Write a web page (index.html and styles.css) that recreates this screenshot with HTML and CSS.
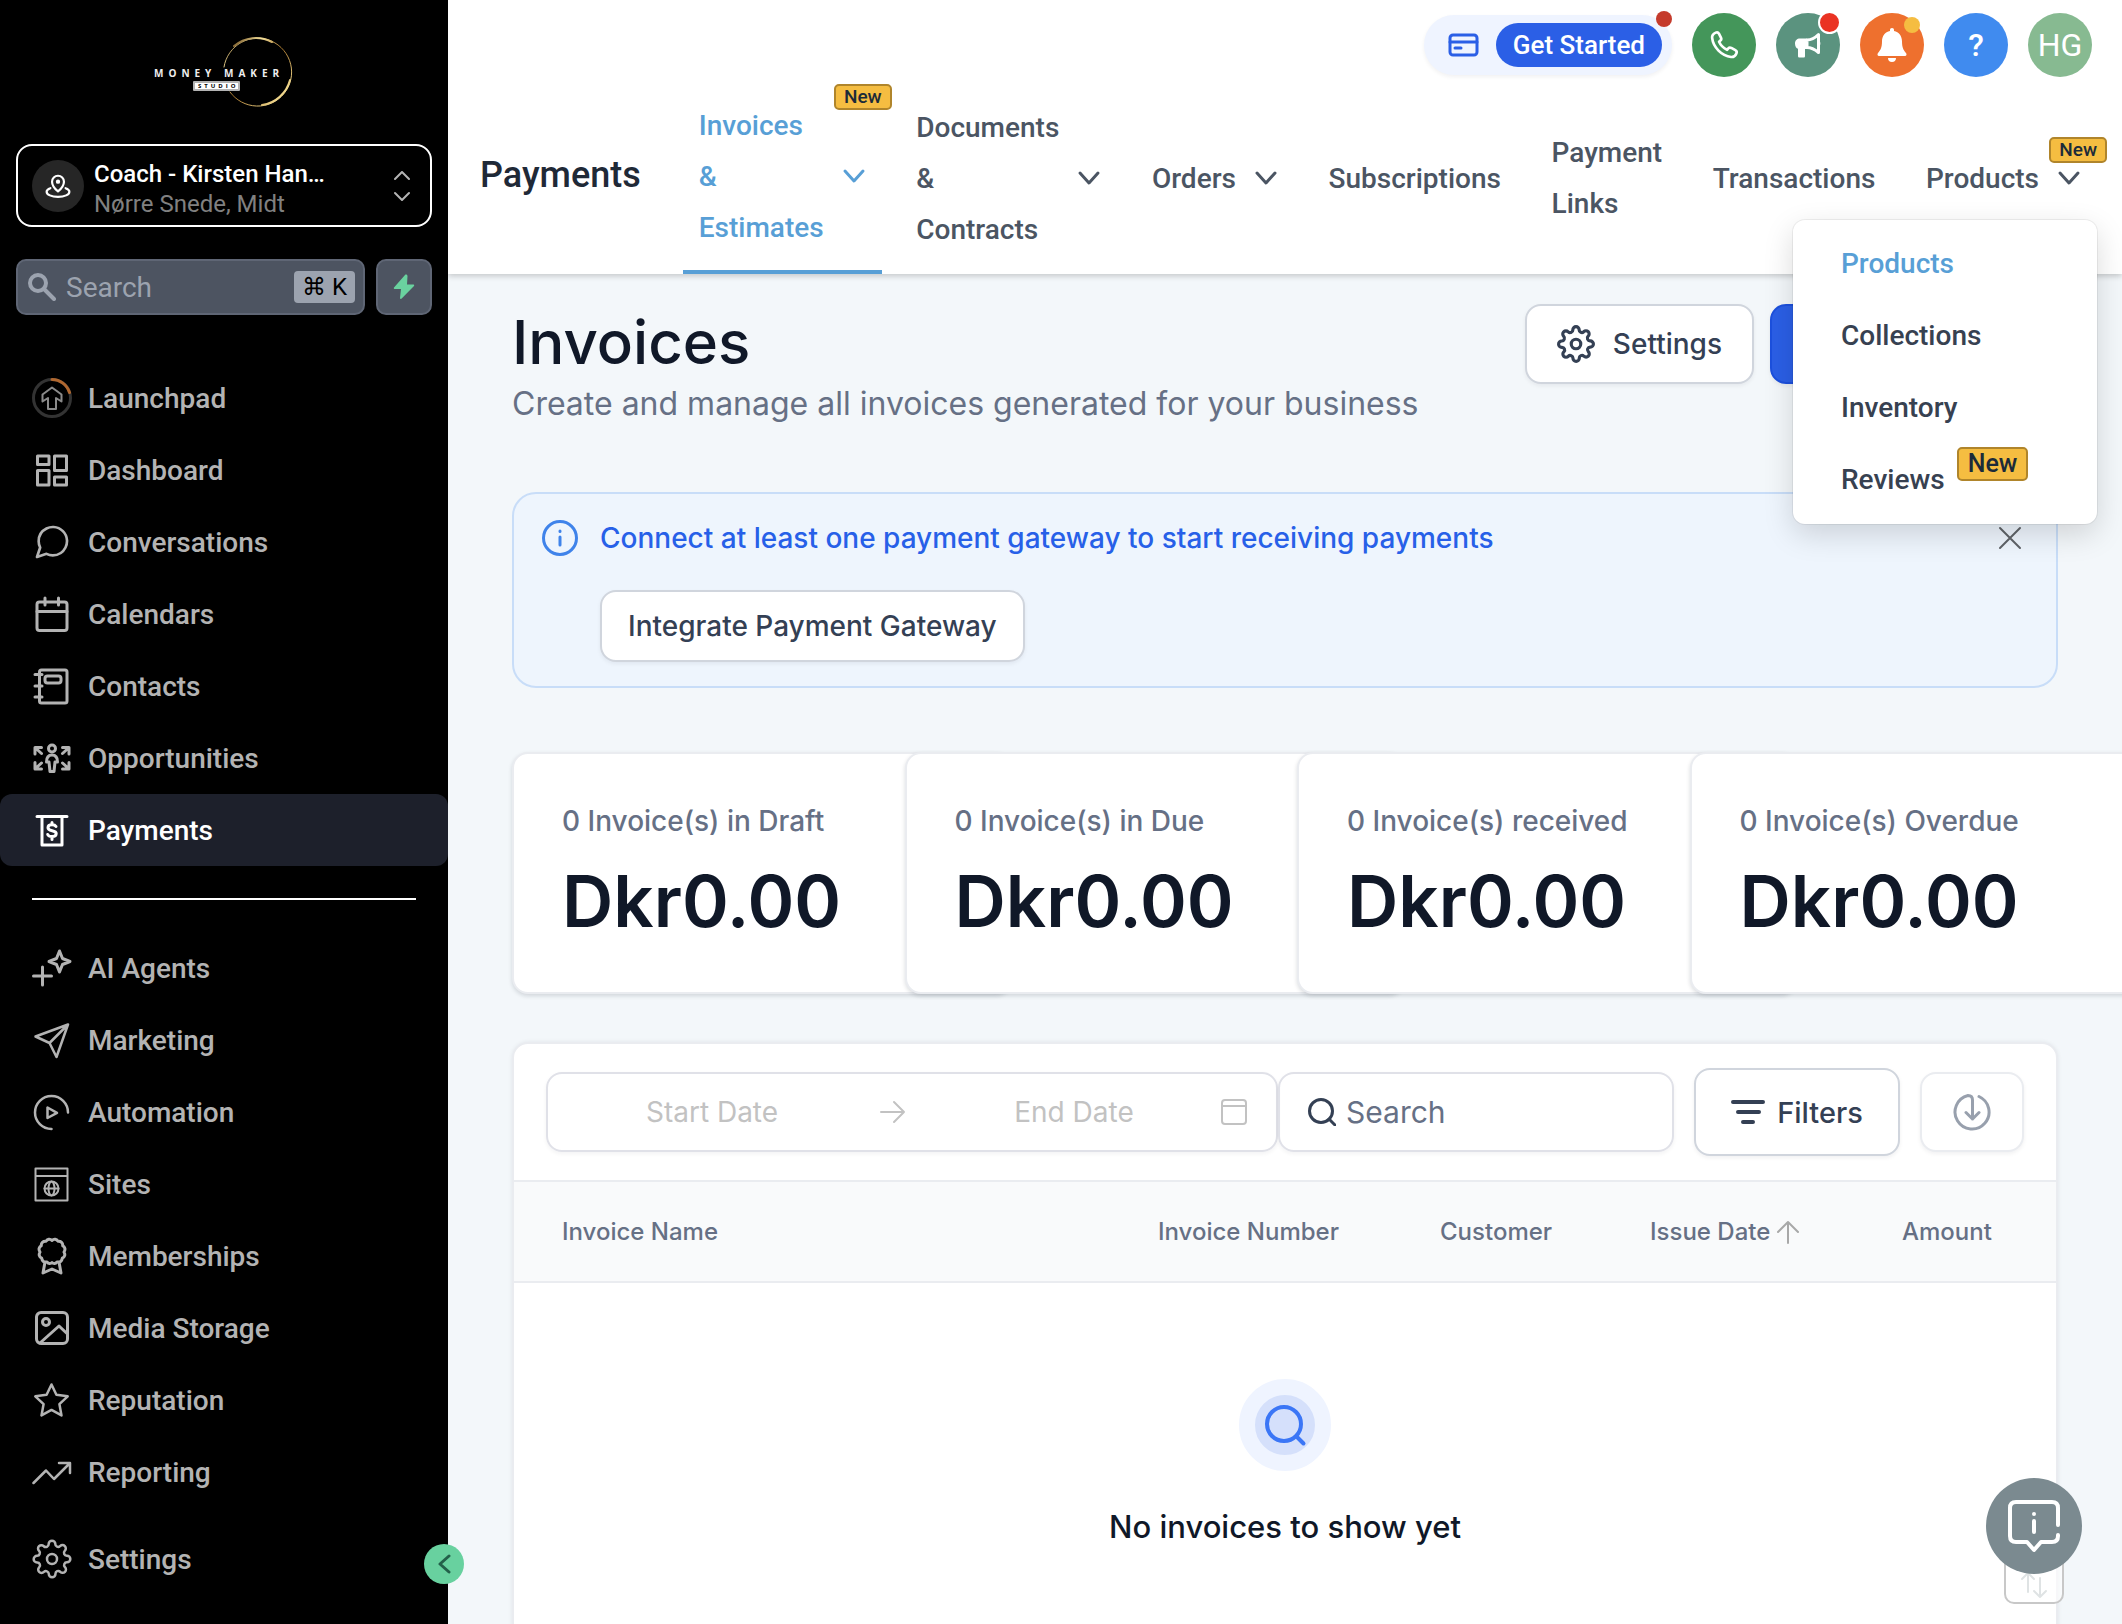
FILE: index.html
```html
<!DOCTYPE html>
<html lang="en">
<head>
    <meta charset="UTF-8">
    <meta name="viewport" content="width=device-width, initial-scale=1.0">
    <title>Invoices</title>
    <link rel="stylesheet" href="styles.css">
</head>
<body>

<!-- Shared icons -->
<svg class="sprite" aria-hidden="true">
    <symbol id="icon-gear" viewBox="0 0 24 24">
        <circle cx="12" cy="12" r="3"/>
        <path d="M19.4 15a1.65 1.65 0 0 0 .33 1.82l.06.06a2 2 0 0 1 0 2.83 2 2 0 0 1-2.83 0l-.06-.06a1.65 1.65 0 0 0-1.82-.33 1.65 1.65 0 0 0-1 1.51V21a2 2 0 0 1-2 2 2 2 0 0 1-2-2v-.09A1.65 1.65 0 0 0 9 19.4a1.65 1.65 0 0 0-1.82.33l-.06.06a2 2 0 0 1-2.83 0 2 2 0 0 1 0-2.83l.06-.06a1.65 1.65 0 0 0 .33-1.82 1.65 1.65 0 0 0-1.51-1H3a2 2 0 0 1-2-2 2 2 0 0 1 2-2h.09A1.65 1.65 0 0 0 4.6 9a1.65 1.65 0 0 0-.33-1.82l-.06-.06a2 2 0 0 1 0-2.83 2 2 0 0 1 2.83 0l.06.06a1.65 1.65 0 0 0 1.82.33H9a1.65 1.65 0 0 0 1-1.51V3a2 2 0 0 1 2-2 2 2 0 0 1 2 2v.09a1.65 1.65 0 0 0 1 1.51 1.65 1.65 0 0 0 1.82-.33l.06-.06a2 2 0 0 1 2.83 0 2 2 0 0 1 0 2.83l-.06.06a1.65 1.65 0 0 0-.33 1.82V9a1.65 1.65 0 0 0 1.51 1H21a2 2 0 0 1 2 2 2 2 0 0 1-2 2h-.09a1.65 1.65 0 0 0-1.51 1z"/>
    </symbol>
    <symbol id="icon-chevron" viewBox="0 0 24 24">
        <path d="M3 7l9 10 9-10"/>
    </symbol>
</svg>

<div class="app">

    <!-- Sidebar -->
    <aside class="sidebar">
        <div class="logo">
            <svg width="148" height="76" viewBox="0 0 148 76" role="img" aria-label="Money Maker Studio">
                <defs>
                    <linearGradient id="gold" x1="0" y1="0" x2="1" y2="1">
                        <stop offset="0" stop-color="#6b4a1b"/>
                        <stop offset="0.25" stop-color="#f3df9a"/>
                        <stop offset="0.5" stop-color="#a5752c"/>
                        <stop offset="0.85" stop-color="#f0d78c"/>
                        <stop offset="1" stop-color="#8d6526"/>
                    </linearGradient>
                </defs>
                <path class="logo-ring" d="M74 33A34 34 0 1 1 80 58"/>
                <path class="logo-ring bold" d="M84 12A34 34 0 0 1 122 8M140 46A34 34 0 0 1 112 71"/>
                <text class="logo-name" x="4" y="43">MONEY MAKER</text>
                <rect x="44" y="48" width="45" height="8" fill="#fff"/>
                <text class="logo-sub" x="48" y="54">STUDIO</text>
            </svg>
        </div>

        <button class="location">
            <span class="location-icon">
                <svg width="26" height="26" viewBox="0 0 24 24" aria-hidden="true">
                    <path d="M12 17s5.500-4.500 5.500-9a5.500 5.500 0 0 0-11 0c0 4.500 5.500 9 5.500 9z"/>
                    <circle cx="12" cy="8" r="1"/>
                    <path d="M5 14c-2 .7-3.500 1.700-3.500 3.200C1.500 20 6 22 12 22s10.500-2 10.500-4.800c0-1.500-1.500-2.500-3.500-3.200"/>
                </svg>
            </span>
            <span class="location-text">
                <span class="location-name">Coach - Kirsten Han…</span>
                <span class="location-place">Nørre Snede, Midt</span>
            </span>
            <svg class="location-arrows" width="16" height="30" viewBox="0 0 16 30" aria-hidden="true">
                <path d="M1 8l7-7 7 7M1 22l7 7 7-7"/>
            </svg>
        </button>

        <div class="sidebar-search">
            <label class="search-field">
                <svg width="28" height="28" viewBox="0 0 28 28" aria-hidden="true">
                    <circle cx="10" cy="10" r="8"/>
                    <path d="M16 16l10 10"/>
                </svg>
                <input type="text" placeholder="Search" aria-label="Search the account">
                <kbd>⌘ K</kbd>
            </label>
            <button class="bolt" aria-label="Quick actions">
                <svg width="24" height="26" viewBox="0 0 24 26" aria-hidden="true">
                    <path d="M13 1L2 13.500c-.6.800 0 1.500 1 1.500h6l-1 9c0 1 1 1.300 1.700.5L22 12c.6-.8 0-1.500-1-1.500h-6l.5-8.500c0-1-1.500-2-2.500-1z"/>
                </svg>
            </button>
        </div>

        <nav class="side-nav" aria-label="Main">
            <a href="#" class="side-link">
                <svg class="side-icon" viewBox="0 0 40 40">
                    <circle cx="20" cy="20" r="18.500" stroke="#333"/>
                    <path d="M20 1.500A18.500 18.500 0 0 1 37.500 14.500" stroke="#b0672f"/>
                    <path d="M20 9.500l9.500 7v7L24 20v11h-8V20l-5.500 3.500v-7z" stroke="#8b8b8b" stroke-width="2"/>
                </svg>
                Launchpad
            </a>
            <a href="#" class="side-link">
                <svg class="side-icon" viewBox="0 0 40 40">
                    <path d="M5.500 6h11.500v8.500H5.500zM22.500 6H34.500v14.500H22.500zM5.500 20.500h11.500V35H5.500zM22.500 27H34.500v8H22.500z"/>
                </svg>
                Dashboard
            </a>
            <a href="#" class="side-link">
                <svg class="side-icon" viewBox="0 0 24 24">
                    <path stroke-width="1.600" d="M21 11.500a8.380 8.380 0 0 1-.9 3.800 8.500 8.500 0 0 1-7.600 4.700 8.380 8.380 0 0 1-3.800-.9L3 21l1.900-5.700a8.380 8.380 0 0 1-.9-3.800 8.500 8.500 0 0 1 4.700-7.600 8.380 8.380 0 0 1 3.800-.9h.5a8.480 8.480 0 0 1 8 8v.5z"/>
                </svg>
                Conversations
            </a>
            <a href="#" class="side-link">
                <svg class="side-icon" viewBox="0 0 40 40">
                    <rect x="5" y="8" width="30" height="28.500" rx="2.500"/>
                    <path d="M5 17.500h30M13 4v7M26.500 4v7"/>
                </svg>
                Calendars
            </a>
            <a href="#" class="side-link">
                <svg class="side-icon" viewBox="0 0 40 40">
                    <rect x="7.500" y="4" width="27.500" height="33" rx="2"/>
                    <rect x="13" y="10" width="16" height="7" rx="2.500"/>
                    <path d="M3 8.500h7M3 20h7M3 31h7"/>
                </svg>
                Contacts
            </a>
            <a href="#" class="side-link">
                <svg class="side-icon" viewBox="0 0 40 40">
                    <circle cx="20" cy="10.500" r="3.500"/>
                    <path d="M20 17c-4 0-5.500 2.500-5.500 7h2.500l1 9.500h4l1-9.500h2.500c0-4.500-1.500-7-5.500-7z"/>
                    <path d="M3 16V9.500h6.500M3.500 10l6 5.500M37 16V9.500h-6.500M36.500 10l-6 5.500M3 24.500V31h6.500M3.500 30.500l6-5.500M37 24.500V31h-6.500M36.500 30.500l-6-5.500"/>
                </svg>
                Opportunities
            </a>
            <a href="#" class="side-link active" aria-current="page">
                <svg class="side-icon" viewBox="0 0 40 40">
                    <path d="M5 6.500h30M10 6.500v28.500h20V6.500"/>
                    <path d="M24 16.500c-.7-1.200-2-1.700-4-1.700-2.500 0-4 1-4 2.900 0 4.300 8.200 1.700 8.200 5.900 0 1.900-1.700 3-4.200 3-2.200 0-3.700-.7-4.300-2.100M20 12.500v2M20 27v2.500"/>
                </svg>
                Payments
            </a>

            <hr class="side-divider">

            <a href="#" class="side-link">
                <svg class="side-icon" viewBox="0 0 40 40">
                    <path d="M27.500 3l3 7.500 7.500 3-7.500 3-3 7.500-3-7.500-7.500-3 7.500-3zM10.500 19v18M1.500 28h18"/>
                </svg>
                AI Agents
            </a>
            <a href="#" class="side-link">
                <svg class="side-icon" viewBox="0 0 40 40">
                    <path stroke-width="2.500" d="M36 4.500L3.500 16.500l14 6.500 7 14zM17.500 23L36 4.500"/>
                </svg>
                Marketing
            </a>
            <a href="#" class="side-link">
                <svg class="side-icon" viewBox="0 0 40 40">
                    <path stroke-width="2.500" d="M36 20.500A16.500 16.500 0 1 0 19.500 37M15.500 15.500v10.500l9.500-5.200z"/>
                </svg>
                Automation
            </a>
            <a href="#" class="side-link">
                <svg class="side-icon" viewBox="0 0 40 40">
                    <path stroke-width="2" d="M3.500 4.500h32V36.500h-32zM3.500 12h32"/>
                    <circle cx="19.500" cy="24.500" r="7" stroke-width="2"/>
                    <ellipse cx="19.500" cy="24.500" rx="3" ry="7" stroke-width="2"/>
                    <path stroke-width="2" d="M12.500 24.500h14"/>
                </svg>
                Sites
            </a>
            <a href="#" class="side-link">
                <svg class="side-icon" viewBox="0 0 40 40">
                    <path d="M20 4.500c2-2 4.500-1.500 6 .8 3-.3 5 1.500 4.700 4.300 2.300 1.400 3 4 1.300 6.400 1.500 2.500.8 5-1.700 6.200-.4 3-2.300 4.300-5.300 3.800-1.500 1.800-3.500 2-5 .5-1.500 1.500-3.500 1.300-5-.5-3 .5-4.900-.8-5.300-3.800-2.500-1.200-3.200-3.700-1.700-6.200-1.700-2.400-1-5 1.300-6.400C9 6.800 11 5 14 5.300c1.500-2.300 4-2.800 6-.8zM13 26l-2 11 9-4 9 4-2-11"/>
                </svg>
                Memberships
            </a>
            <a href="#" class="side-link">
                <svg class="side-icon" viewBox="0 0 40 40">
                    <rect x="4.500" y="4.500" width="31" height="31" rx="4.500"/>
                    <circle cx="14" cy="14" r="3.500"/>
                    <path d="M8 35L27 18l8.500 8"/>
                </svg>
                Media Storage
            </a>
            <a href="#" class="side-link">
                <svg class="side-icon" viewBox="0 0 40 40">
                    <path stroke-width="2.500" d="M19.500 4.500l4.900 10.300 11.300 1.500-8.300 7.800 2.100 11.300-10-5.500-10 5.500 2.100-11.300-8.300-7.800 11.300-1.500z"/>
                </svg>
                Reputation
            </a>
            <a href="#" class="side-link">
                <svg class="side-icon" viewBox="0 0 40 40">
                    <path stroke-width="2.500" d="M1.500 31L14 18.500l8 8.500L37 12M27 11h11v10"/>
                </svg>
                Reporting
            </a>
        </nav>

        <a href="#" class="side-link side-settings">
            <svg class="side-icon" viewBox="0 0 24 24"><use href="#icon-gear"/></svg>
            Settings
        </a>

        <button class="collapse" aria-label="Collapse sidebar">
            <svg width="14" height="20" viewBox="0 0 14 20" aria-hidden="true"><path d="M12 2L3 10l9 8"/></svg>
        </button>
    </aside>

    <!-- Right side -->
    <div class="content">
        <header class="header">
            <div class="topbar">
                <div class="get-started">
                    <svg width="32" height="24" viewBox="0 0 32 24" aria-hidden="true">
                        <rect x="2" y="2" width="27" height="20" rx="3"/>
                        <path d="M2 9h27M7 15h6"/>
                    </svg>
                    <button class="get-started-button">Get Started</button>
                    <span class="dot dot-started"></span>
                </div>
                <button class="round green" aria-label="Phone">
                    <svg width="32" height="32" viewBox="0 0 24 24" fill="none" stroke="currentColor" aria-hidden="true">
                        <path d="M8.200 3.500c-.5-.9-1.500-1.200-2.400-.8-1.900.8-2.900 2.100-2.700 4C3.900 13.800 10.300 20.200 17.300 21c1.900.2 3.200-.8 4-2.700.4-.9.1-1.900-.8-2.400l-3-1.700c-.8-.4-1.700-.3-2.300.4l-.9 1c-2.900-1.400-4.800-3.300-6-6l1-.9c.7-.6.8-1.500.4-2.300z"/>
                    </svg>
                </button>
                <button class="round teal" aria-label="Announcements">
                    <svg width="32" height="32" viewBox="0 0 32 32" fill="currentColor" aria-hidden="true">
                        <path d="M15 9.500H8c-3 0-5 2-5 5s1.500 5 3 5.300V27c0 1 .7 1.500 1.500 1.500h4c1 0 1.500-.5 1.500-1.500v-7h2z"/>
                        <path d="M15 11c4.500 0 8.500-2.500 11.500-5.500v18C23.500 21 19.500 18.500 15 18.500z" fill="none" stroke="currentColor" stroke-width="3" stroke-linejoin="round"/>
                        <path d="M27 11.500c1.800.8 1.800 5.200 0 6z"/>
                    </svg>
                    <span class="dot dot-red"></span>
                </button>
                <button class="round orange" aria-label="Notifications">
                    <svg width="32" height="36" viewBox="0 0 32 36" fill="currentColor" aria-hidden="true">
                        <path d="M16 1c1.300 0 2 .9 2 2v1c5 1 8 5 8 10.500 0 6 1.500 8.500 4 11.500 1 1.200.5 3-1 3H3c-1.500 0-2-1.800-1-3 2.500-3 4-5.500 4-11.500C6 9 9 5 14 4V3c0-1.100.7-2 2-2zM12 31h8c0 2.500-1.500 4-4 4s-4-1.500-4-4z"/>
                    </svg>
                    <span class="dot dot-yellow"></span>
                </button>
                <button class="round blue" aria-label="Help">?</button>
                <button class="round avatar" aria-label="Account">HG</button>
            </div>

            <div class="subnav">
                <h2 class="subnav-title">Payments</h2>
                <ul class="subnav-list">
                    <li class="active">
                        <button class="subnav-link">
                            <span class="stacked">Invoices &amp; Estimates</span>
                            <svg class="chevron"><use href="#icon-chevron"/></svg>
                            <span class="badge badge-corner">New</span>
                        </button>
                    </li>
                    <li>
                        <button class="subnav-link">
                            <span class="stacked">Documents &amp; Contracts</span>
                            <svg class="chevron"><use href="#icon-chevron"/></svg>
                        </button>
                    </li>
                    <li>
                        <button class="subnav-link">
                            Orders
                            <svg class="chevron"><use href="#icon-chevron"/></svg>
                        </button>
                    </li>
                    <li><a href="#" class="subnav-link">Subscriptions</a></li>
                    <li><a href="#" class="subnav-link"><span class="stacked">Payment Links</span></a></li>
                    <li><a href="#" class="subnav-link">Transactions</a></li>
                    <li>
                        <div class="dropdown">
                            <button class="subnav-link" aria-expanded="true">
                                Products
                                <svg class="chevron"><use href="#icon-chevron"/></svg>
                                <span class="badge badge-corner">New</span>
                            </button>
                            <ul class="menu">
                                <li><a href="#" class="menu-link current">Products</a></li>
                                <li><a href="#" class="menu-link">Collections</a></li>
                                <li><a href="#" class="menu-link">Inventory</a></li>
                                <li><a href="#" class="menu-link">Reviews <span class="badge badge-large">New</span></a></li>
                            </ul>
                        </div>
                    </li>
                </ul>
            </div>
        </header>

        <main class="main">
            <div class="page-head">
                <div>
                    <h1 class="page-title">Invoices</h1>
                    <p class="page-description">Create and manage all invoices generated for your business</p>
                </div>
                <div class="page-actions">
                    <button class="button button-settings">
                        <svg width="38" height="38" viewBox="0 0 24 24"><use href="#icon-gear"/></svg>
                        Settings
                    </button>
                    <button class="button button-primary" aria-label="Create invoice"></button>
                </div>
            </div>

            <!-- Gateway notice -->
            <section class="notice">
                <svg class="notice-icon" width="36" height="40" viewBox="0 0 36 36" aria-hidden="true">
                    <circle cx="18" cy="18" r="16.500"/>
                    <path d="M18 17v8M18 11v.5"/>
                </svg>
                <div class="notice-body">
                    <p class="notice-text">Connect at least one payment gateway to start receiving payments</p>
                    <button class="button">Integrate Payment Gateway</button>
                </div>
                <button class="notice-close" aria-label="Dismiss">
                    <svg width="24" height="24" viewBox="0 0 24 24" aria-hidden="true"><path d="M2 2l20 20M22 2L2 22"/></svg>
                </button>
            </section>

            <!-- Totals -->
            <section class="stats">
                <div class="stat">
                    <p class="stat-label">0 Invoice(s) in Draft</p>
                    <p class="stat-value">Dkr0.00</p>
                </div>
                <div class="stat">
                    <p class="stat-label">0 Invoice(s) in Due</p>
                    <p class="stat-value">Dkr0.00</p>
                </div>
                <div class="stat">
                    <p class="stat-label">0 Invoice(s) received</p>
                    <p class="stat-value">Dkr0.00</p>
                </div>
                <div class="stat">
                    <p class="stat-label">0 Invoice(s) Overdue</p>
                    <p class="stat-value">Dkr0.00</p>
                </div>
            </section>

            <!-- Invoice list -->
            <section class="panel">
                <div class="toolbar">
                    <div class="date-range">
                        <input type="text" placeholder="Start Date" aria-label="Start date">
                        <svg class="date-arrow" width="26" height="24" viewBox="0 0 26 24" aria-hidden="true"><path d="M1 12h23M14 2l10 10-10 10"/></svg>
                        <input type="text" placeholder="End Date" aria-label="End date">
                        <svg width="28" height="28" viewBox="0 0 28 28" aria-hidden="true"><rect x="2" y="2" width="24" height="24" rx="3"/><path d="M2 8h24"/></svg>
                    </div>
                    <label class="list-search">
                        <svg width="28" height="28" viewBox="0 0 28 28" aria-hidden="true"><circle cx="13" cy="13" r="11.500"/><path d="M21 21l6 6"/></svg>
                        <input type="text" placeholder="Search" aria-label="Search invoices">
                    </label>
                    <button class="button button-filters">
                        <svg width="34" height="26" viewBox="0 0 34 26" aria-hidden="true"><path d="M2 3h30M7 13h21M12 23h10"/></svg>
                        Filters
                    </button>
                    <button class="button button-export" aria-label="Export">
                        <svg width="40" height="40" viewBox="0 0 40 40" aria-hidden="true"><path d="M27 4.500A17 17 0 1 1 16 3.500c3 0 4.500 1.500 4.500 4.500v19M14 20.500l6.500 6.500 6.500-6.500"/></svg>
                    </button>
                </div>

                <table class="invoices">
                    <thead>
                        <tr>
                            <th class="col-name">Invoice Name</th>
                            <th class="col-number">Invoice Number</th>
                            <th class="col-customer">Customer</th>
                            <th class="col-date">
                                <span class="sortable">
                                    Issue Date
                                    <svg width="24" height="24" viewBox="0 0 24 24" aria-hidden="true"><path d="M12 23V2M2 12L12 2l10 10"/></svg>
                                </span>
                            </th>
                            <th class="col-amount">Amount</th>
                        </tr>
                    </thead>
                    <tbody>
                        <tr>
                            <td colspan="5">
                                <div class="empty">
                                    <span class="empty-icon">
                                        <svg width="44" height="44" viewBox="0 0 44 44" aria-hidden="true"><circle cx="21" cy="21" r="17"/><path d="M33.500 33.500l7 7"/></svg>
                                    </span>
                                    <p class="empty-text">No invoices to show yet</p>
                                </div>
                            </td>
                        </tr>
                    </tbody>
                </table>
            </section>
        </main>
    </div>

    <!-- Floating help -->
    <div class="floating">
        <button class="help" aria-label="Support chat">
            <svg width="54" height="54" viewBox="0 0 54 54" aria-hidden="true">
                <path d="M51 26V9c0-4-2-6-6-6H9C5 3 3 5 3 9v28c0 4 2 6 6 6h11l7 8 7-8h11c4 0 6-2 6-6v-1"/>
                <path d="M27 22v11M27 15v.1"/>
            </svg>
        </button>
        <button class="sort" aria-label="Reorder">
            <svg width="28" height="28" viewBox="0 0 28 28" aria-hidden="true"><path d="M8 21V2M2 8l6-6 6 6M20 7v19M14 20l6 6 6-6"/></svg>
        </button>
    </div>

</div>

</body>
</html>
```

FILE: styles.css
```css
/* General */
* {
    box-sizing: border-box;
}

body {
    margin: 0;
    font-family: Inter, "Liberation Sans", sans-serif;
    font-size: 28px;
    color: #101828;
    background-color: #f3f7fa;
}

button,
input {
    font: inherit;
    color: inherit;
}

button {
    cursor: pointer;
}

h1, h2, p, ul {
    margin: 0;
    padding: 0;
}

ul {
    list-style: none;
}

a {
    color: inherit;
    text-decoration: none;
}

svg {
    flex-shrink: 0;
    fill: none;
    stroke: currentColor;
    stroke-width: 2;
    stroke-linecap: round;
    stroke-linejoin: round;
}

input {
    min-width: 0;
    width: 100%;
    padding: 0;
    border: none;
    outline: none;
    background: none;
}

.sprite {
    position: absolute;
    width: 0;
    height: 0;
}

.app {
    display: flex;
    height: 100vh;
    overflow: hidden;
}

/* Sidebar */
.sidebar {
    position: relative;
    z-index: 5;
    flex-shrink: 0;
    display: flex;
    flex-direction: column;
    width: 448px;
    padding-bottom: 29px;
    background-color: #000;
    color: #b3b3b3;
    font-family: Roboto, sans-serif;
}

.logo {
    display: flex;
    justify-content: center;
    padding: 34px 0;
}

.logo-ring {
    stroke: url(#gold);
    stroke-width: 1;
}

.logo-ring.bold {
    stroke-width: 2;
}

.logo-name,
.logo-sub {
    font-family: "Open Sans", sans-serif;
    font-weight: 700;
    stroke: none;
}

.logo-name {
    fill: #eee;
    font-size: 10px;
    letter-spacing: 5px;
}

.logo-sub {
    fill: #000;
    font-size: 6px;
    letter-spacing: 3px;
}

.location {
    display: flex;
    align-items: center;
    gap: 10px;
    height: 83px;
    margin: 0 16px 32px;
    padding: 0 20px 0 14px;
    border: 2px solid #fff;
    border-radius: 16px;
    background: none;
    text-align: left;
}

.location-icon {
    display: flex;
    align-items: center;
    justify-content: center;
    width: 52px;
    height: 52px;
    border-radius: 50%;
    background-color: #262626;
    color: #fff;
}

.location-text {
    flex: 1;
    display: flex;
    flex-direction: column;
    padding-top: 6px;
    font-size: 24px;
    line-height: 30px;
}

.location-name {
    color: #fff;
    font-weight: 500;
}

.location-place {
    color: #808080;
}

.location-arrows {
    color: #b3b3b3;
}

.sidebar-search {
    display: flex;
    gap: 11px;
    margin: 0 16px 47px;
}

.search-field {
    flex: 1;
    min-width: 0;
    display: flex;
    align-items: center;
    gap: 10px;
    height: 56px;
    padding: 0 8px 0 10px;
    border: 2px solid #5f6675;
    border-radius: 10px;
    background-color: #4d5461;
    color: #9ca3af;
}

.search-field svg {
    stroke-width: 4;
}

.search-field input::placeholder {
    color: #9ca3af;
    opacity: 1;
}

.search-field kbd {
    flex-shrink: 0;
    padding: 0 8px;
    border-radius: 4px;
    background-color: #9ca3af;
    color: #000;
    font-family: Roboto, "DejaVu Sans", sans-serif;
    font-size: 24px;
    line-height: 32px;
}

.bolt {
    display: flex;
    align-items: center;
    justify-content: center;
    width: 56px;
    height: 56px;
    border: 2px solid #5f6675;
    border-radius: 10px;
    background-color: #4d5461;
    color: #6ad29f;
}

.bolt svg {
    fill: currentColor;
    stroke: none;
}

.side-link {
    display: flex;
    align-items: center;
    gap: 16px;
    height: 72px;
    padding: 0 32px;
    border-radius: 12px;
    font-weight: 500;
}

.side-link.active {
    background-color: #1d202b;
    color: #fff;
}

.side-icon {
    width: 40px;
    height: 40px;
    stroke-width: 3;
}

.side-divider {
    height: 2px;
    margin: 32px;
    border: none;
    background-color: #fff;
}

.side-settings {
    margin-top: auto;
}

.side-settings .side-icon {
    stroke-width: 1.5;
}

.collapse {
    position: absolute;
    right: -16px;
    bottom: 40px;
    display: flex;
    align-items: center;
    justify-content: center;
    width: 40px;
    height: 40px;
    border: none;
    border-radius: 50%;
    background-color: #68d19f;
    color: #23604a;
}

.collapse svg {
    stroke-width: 3;
}

/* Header */
.content {
    flex: 1;
    min-width: 0;
    display: flex;
    flex-direction: column;
}

.header {
    position: relative;
    z-index: 2;
    background-color: #fff;
    box-shadow: 0 2px 6px rgba(0, 0, 0, 0.2);
    font-family: Roboto, sans-serif;
    font-weight: 500;
}

.topbar {
    display: flex;
    align-items: center;
    justify-content: flex-end;
    gap: 20px;
    padding: 13px 30px 5px;
}

.get-started {
    position: relative;
    display: flex;
    align-items: center;
    gap: 16px;
    height: 60px;
    padding: 0 10px 0 24px;
    border-radius: 30px;
    background-color: #eff4ff;
    box-shadow: 0 2px 4px rgba(16, 24, 40, 0.06);
    color: #2b5fe6;
}

.get-started svg {
    stroke-width: 3;
}

.get-started-button {
    height: 44px;
    padding: 0 17px;
    border: none;
    border-radius: 22px;
    background-color: #2b5fe6;
    color: #fff;
    font-size: 26px;
}

.round {
    position: relative;
    display: flex;
    align-items: center;
    justify-content: center;
    width: 64px;
    height: 64px;
    padding: 0;
    border: none;
    border-radius: 50%;
    color: #fff;
    font-size: 32px;
}

.round svg[fill="currentColor"] {
    fill: currentColor;
    stroke: none;
}

.green {
    background-color: #44965a;
}

.teal {
    background-color: #5b937f;
}

.orange {
    background-color: #ee702e;
}

.blue {
    background-color: #408bef;
}

.avatar {
    background-color: #87ba91;
    font-weight: 400;
}

.dot {
    position: absolute;
    width: 16px;
    height: 16px;
    border-radius: 50%;
}

.dot-started {
    top: -4px;
    right: 0;
    background-color: #c53b2c;
}

.dot-red {
    top: -2px;
    right: -1px;
    width: 23px;
    height: 23px;
    border: 2px solid #fff;
    background-color: #ea3323;
}

.dot-yellow {
    top: 4px;
    right: 4px;
    background-color: #f5bd41;
}

.subnav {
    display: flex;
    gap: 42px;
    height: 192px;
    padding: 0 25px 0 32px;
}

.subnav-title {
    align-self: center;
    padding-bottom: 6px;
    color: #1f2937;
    font-size: 36px;
    font-weight: 500;
}

.subnav-list {
    flex: 1;
    display: flex;
    justify-content: space-between;
    color: #4b5563;
}

.subnav-list > li {
    display: flex;
    align-items: center;
}

.subnav-list > .active {
    border-bottom: 4px solid #589fd6;
    color: #589fd6;
}

.subnav-link {
    position: relative;
    display: flex;
    align-items: center;
    gap: 18px;
    padding: 0 16px;
    border: none;
    background: none;
    line-height: 51px;
    text-align: left;
}

.stacked {
    width: min-content;
}

.chevron {
    width: 24px;
    height: 24px;
    stroke-width: 3;
}

.badge {
    padding: 0 8px;
    border: 2px solid #b0852b;
    border-radius: 5px;
    background-color: #f5bd41;
    color: #1c2b39;
    font-size: 19px;
    line-height: 22px;
}

.badge-corner {
    position: absolute;
    top: -16px;
    right: -10px;
}

.badge-large {
    align-self: flex-start;
    margin-top: 3px;
    padding: 0 9px;
    font-size: 25px;
    line-height: 30px;
}

.dropdown {
    position: relative;
}

.menu {
    position: absolute;
    top: calc(100% + 16px);
    right: 0;
    width: 304px;
    padding: 8px 0;
    border-radius: 12px;
    background-color: #fff;
    box-shadow: 0 0 0 1px rgba(0, 0, 0, 0.06), 0 10px 30px rgba(0, 0, 0, 0.15);
    color: #374151;
}

.menu-link {
    display: flex;
    align-items: center;
    gap: 12px;
    height: 72px;
    padding: 0 48px;
}

.menu-link.current {
    color: #589fd6;
}

/* Page */
.main {
    flex: 1;
    min-height: 0;
    display: flex;
    flex-direction: column;
    padding: 30px 64px 0;
    overflow: hidden;
}

.page-head {
    display: flex;
    justify-content: space-between;
    margin-bottom: 64px;
}

.page-title {
    font-size: 60px;
    font-weight: 500;
    line-height: 76px;
}

.page-description {
    color: #667085;
    font-size: 32px;
    line-height: 48px;
}

.page-actions {
    display: flex;
    align-items: flex-start;
    gap: 16px;
}

.button {
    display: flex;
    align-items: center;
    justify-content: center;
    height: 72px;
    padding: 0 26px;
    border: 2px solid #d0d5dd;
    border-radius: 16px;
    background-color: #fff;
    box-shadow: 0 2px 4px rgba(16, 24, 40, 0.06);
    color: #344054;
    font-weight: 500;
}

.button-settings {
    gap: 18px;
    height: 80px;
    padding: 0 30px;
}

.button-primary {
    width: 288px;
    height: 80px;
    border-color: #1c50dd;
    background-color: #2b5fe6;
}

/* Notice */
.notice {
    flex-shrink: 0;
    display: flex;
    align-items: flex-start;
    gap: 22px;
    margin-bottom: 64px;
    padding: 24px 28px;
    border: 2px solid #c8ddf8;
    border-radius: 24px;
    background-color: #eef5fd;
}

.notice-icon {
    color: #3f83ea;
    stroke-width: 3;
}

.notice-body {
    flex: 1;
    display: flex;
    flex-direction: column;
    align-items: flex-start;
    gap: 32px;
}

.notice-text {
    color: #2760e8;
    font-weight: 500;
    line-height: 40px;
}

.notice-close {
    display: flex;
    padding: 8px 6px;
    border: none;
    background: none;
    color: #5f6368;
}

/* Totals */
.stats {
    flex-shrink: 0;
    display: grid;
    grid-template-columns: repeat(4, minmax(0, 1fr));
    gap: 24px;
    margin-bottom: 48px;
}

.stat {
    min-width: 500px;
    padding: 47px 48px;
    border: 2px solid #eaecf0;
    border-radius: 16px;
    background-color: #fff;
    box-shadow: 0 2px 4px rgba(16, 24, 40, 0.15);
}

.stat-label {
    margin-bottom: 16px;
    color: #667085;
    font-weight: 500;
    line-height: 40px;
}

.stat-value {
    font-size: 71px;
    font-weight: 600;
    line-height: 88px;
}

/* Invoice list */
.panel {
    flex: 1 0 auto;
    border: 2px solid #eaecf0;
    border-radius: 16px;
    background-color: #fff;
    box-shadow: 0 0 4px rgba(16, 24, 40, 0.08);
}

.toolbar {
    display: flex;
    align-items: center;
    padding: 24px 32px;
}

.date-range,
.list-search {
    display: flex;
    align-items: center;
    height: 80px;
    border: 2px solid #e0e1e8;
    border-radius: 16px;
    box-shadow: 0 2px 4px rgba(16, 24, 40, 0.05);
}

.date-range {
    flex: 1;
    min-width: 0;
    padding: 0 28px 0 18px;
    color: #c2c2c2;
}

.date-arrow {
    margin: 0 22px;
}

.date-range input {
    text-align: center;
}

.date-range input::placeholder {
    color: #c2c2c2;
    opacity: 1;
}

.list-search {
    flex-shrink: 0;
    gap: 10px;
    width: 396px;
    padding: 0 28px;
    color: #344054;
    font-size: 30px;
}

.list-search svg {
    stroke-width: 3;
}

.list-search input::placeholder {
    color: #667085;
    opacity: 1;
}

.button-filters {
    flex-shrink: 0;
    gap: 12px;
    width: 206px;
    height: 88px;
    margin: 0 20px;
    padding: 0;
    font-size: 29px;
}

.button-filters svg {
    stroke-width: 4;
}

.button-export {
    flex-shrink: 0;
    width: 104px;
    height: 80px;
    padding: 0;
    border-color: #eaecf0;
    color: #98a0ad;
}

.button-export svg {
    stroke-width: 3;
}

.invoices {
    width: 100%;
    border-collapse: collapse;
    table-layout: fixed;
}

.invoices th {
    height: 101px;
    padding: 0 0 0 48px;
    border-top: 2px solid #eaecf0;
    border-bottom: 2px solid #eaecf0;
    background-color: #f9fafb;
    color: #667085;
    font-size: 24px;
    font-weight: 500;
    text-align: left;
}

.col-number {
    width: 282px;
}

.col-customer {
    width: 210px;
}

.col-date {
    width: 252px;
}

.col-amount {
    width: 202px;
}

.sortable {
    display: flex;
    align-items: center;
    gap: 6px;
}

.sortable svg {
    color: #a8a8a8;
}

.invoices td {
    padding: 0;
}

.empty {
    display: flex;
    flex-direction: column;
    align-items: center;
    gap: 36px;
    padding: 96px 0;
}

.empty-icon {
    display: flex;
    align-items: center;
    justify-content: center;
    width: 92px;
    height: 92px;
    border: 16px solid #eff4ff;
    border-radius: 50%;
    background-color: #d5e0fb;
    color: #3b76f6;
}

.empty-icon svg {
    stroke-width: 4;
}

.empty-text {
    font-size: 31px;
    font-weight: 500;
    line-height: 40px;
}

/* Floating help */
.floating {
    position: fixed;
    right: 40px;
    bottom: 20px;
    z-index: 10;
    display: flex;
    flex-direction: column;
    align-items: center;
}

.help {
    z-index: 1;
    display: flex;
    align-items: center;
    justify-content: center;
    width: 96px;
    height: 96px;
    padding: 0;
    border: none;
    border-radius: 50%;
    background-color: #7b8a90;
    color: #fff;
}

.help svg {
    stroke-width: 4;
}

.sort {
    display: flex;
    align-items: flex-end;
    justify-content: center;
    width: 60px;
    height: 60px;
    margin-top: -30px;
    padding: 0 0 3px;
    border: 2px solid #c8c8c8;
    border-radius: 10px;
    background-color: rgba(255, 255, 255, 0.6);
    color: #dfe3e4;
}
```
